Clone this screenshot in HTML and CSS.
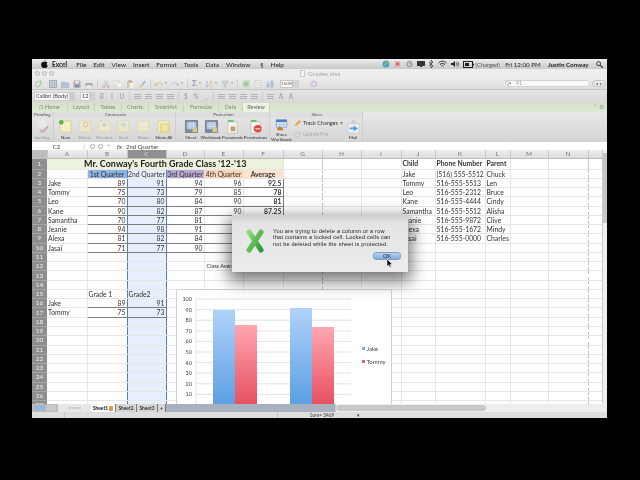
FILE: index.html
```html
<!DOCTYPE html>
<html lang="en">
<head>
  <meta charset="UTF-8">
  <title>Grades.xlsx</title>
  <link rel="stylesheet" href="styles.css">
</head>
<body>
  <svg class="defs" width="0" height="0">
    <defs>
      <linearGradient id="gradBlue" x1="0" y1="0" x2="0" y2="1"><stop offset="0" stop-color="#b0d2fa"/><stop offset="1" stop-color="#5a9ee2"/></linearGradient>
      <linearGradient id="gradRed" x1="0" y1="0" x2="0" y2="1"><stop offset="0" stop-color="#fea6b0"/><stop offset="1" stop-color="#e74e5e"/></linearGradient>
      <linearGradient id="gradX" x1="0" y1="0" x2="1" y2="1"><stop offset="0" stop-color="#8ddc72"/><stop offset="1" stop-color="#2f9a3a"/></linearGradient>
      <symbol id="note" viewBox="0 0 16 16"><rect x="2" y="2" width="12" height="12" rx="1" fill="#f4efc0" stroke="#d8d29a"/></symbol>
      <symbol id="sheet" viewBox="0 0 16 16"><rect x="1" y="1" width="14" height="14" rx="1" fill="#7d8794"/><path d="M3 3h10v8H3z" fill="#a9c0e2"/><path d="M3 5.500h10M3 8h10M6.500 3v8M10 3v8" stroke="#e8eef8" stroke-width=".6"/><rect x="9" y="9" width="5" height="5" fill="#d8c98c"/></symbol>
      <symbol id="page" viewBox="0 0 16 16"><path d="M3 3h10v12H3z" fill="#f6f6f2" stroke="#b5b5b0" stroke-width=".7"/><path d="M3 1h6v2H3z" fill="#58c860"/><rect x="6" y="8" width="5" height="5" fill="#b2a36e"/></symbol>
      <symbol id="tbNew" viewBox="0 0 8 8"><path d="M1 6c0-3 2-5 6-5 0 4-2 6-5 6" fill="none" stroke="#a5cc9c" stroke-width="1.200"/></symbol>
      <symbol id="tbGrid" viewBox="0 0 8 8"><rect x=".5" y=".5" width="7" height="7" fill="#d4d9de" stroke="#9aa3ac" stroke-width=".8"/><path d="M.5 3h7M.5 5.500h7M3 .5v7M5.500 .5v7" stroke="#9aa3ac" stroke-width=".5"/></symbol>
      <symbol id="tbOpen" viewBox="0 0 8 8"><path d="M.5 2h3l1 1h3v4.500h-7z" fill="#b4c4d8" stroke="#98a6b8" stroke-width=".5"/></symbol>
      <symbol id="tbSave" viewBox="0 0 8 8"><rect x=".5" y=".5" width="7" height="7" rx=".6" fill="#a6acb2"/><rect x="2" y="1" width="4" height="2.500" fill="#e4e6e8"/><rect x="2" y="5" width="4" height="2.500" fill="#888f96"/></symbol>
      <symbol id="tbPrint" viewBox="0 0 8 8"><rect x="2" y=".5" width="4" height="2.500" fill="#e6e6e6"/><rect x=".5" y="3" width="7" height="3" rx=".5" fill="#a4a9ae"/><rect x="2" y="5" width="4" height="2.500" fill="#ececec"/></symbol>
      <symbol id="tbCut" viewBox="0 0 8 8"><path d="M2 .5l3.500 5M6 .5L2.500 5.500" stroke="#b5b5b5" stroke-width=".7" fill="none"/><circle cx="2" cy="6.300" r="1.200" fill="none" stroke="#d69a92" stroke-width=".7"/><circle cx="6" cy="6.300" r="1.200" fill="none" stroke="#d69a92" stroke-width=".7"/></symbol>
      <symbol id="tbCopy" viewBox="0 0 8 8"><rect x=".5" y=".5" width="4.500" height="5.500" fill="#efefe6" stroke="#cfcfc2" stroke-width=".5"/><rect x="3" y="2.500" width="4.500" height="5" fill="#f5f5ee" stroke="#cfcfc2" stroke-width=".5"/></symbol>
      <symbol id="tbPaste" viewBox="0 0 8 8"><rect x="1" y="1" width="6" height="7" rx=".5" fill="#d8c79c"/><rect x="2.500" y=".2" width="3" height="1.600" fill="#aaa"/><rect x="3.500" y="3" width="4" height="5" fill="#f2f2ea"/></symbol>
      <symbol id="tbBrush" viewBox="0 0 8 8"><path d="M1 7l2-3 2 1.500L3 8z" fill="#e0c98b"/><path d="M4 4l3-3.500.8.8L5 5z" fill="#8fa8c8"/></symbol>
      <symbol id="tbUndo" viewBox="0 0 8 8"><path d="M2 4.500C3 2 6 2 7.500 5" stroke="#e1cd8e" stroke-width="1.300" fill="none"/><path d="M0 2.500l3.500 3H0z" fill="#d6c27f"/></symbol>
      <symbol id="tbRedo" viewBox="0 0 8 8"><path d="M6 4.500C5 2 2 2 .5 5" stroke="#c9d2de" stroke-width="1.300" fill="none"/><path d="M8 2.500l-3.500 3H8z" fill="#bcc7d6"/></symbol>
      <symbol id="tbSort" viewBox="0 0 8 8"><path d="M2 1v6M.5 5.500L2 7l1.500-1.500" stroke="#9ab8d8" stroke-width=".8" fill="none"/><path d="M4.500 1.500h3M4.500 4h2.500M4.500 6.500h2" stroke="#d9b88a" stroke-width=".9"/></symbol>
      <symbol id="tbFilter" viewBox="0 0 8 8"><path d="M.5 1h7L5 4.500V7.500L3 6.500v-2z" fill="#cfd3d6" stroke="#aeb4b9" stroke-width=".5"/></symbol>
      <symbol id="tbWidget" viewBox="0 0 8 8"><rect x=".5" y=".5" width="7" height="7" rx="1" fill="#c2d8bc"/><path d="M4 1.500v5M1.500 4h5" stroke="#8fbb86"/></symbol>
      <symbol id="tbPane" viewBox="0 0 8 8"><rect x="1" y=".5" width="6" height="7" fill="#f0f0ea" stroke="#cacac0" stroke-width=".6"/><path d="M2.500 2.500h3M2.500 4h3M2.500 5.500h3" stroke="#d4d4c8" stroke-width=".6"/></symbol>
      <symbol id="tbToolbox" viewBox="0 0 8 8"><path d="M.5 3h3v4.500h-3zM4.500 .5h3v7h-3z" fill="#aebfd6"/><path d="M.5 1h3v1.300h-3z" fill="#c9d5e4"/></symbol>
      <symbol id="tbHelp" viewBox="0 0 8 8"><circle cx="4" cy="4" r="3.500" fill="#d5c3df"/><circle cx="4" cy="4" r="1.300" fill="#f1ecf4"/></symbol>
    </defs>
  </svg>

  <div class="screen">
    <div class="menubar">
      <svg class="apple" viewBox="0 0 10 12" width="7" height="8"><path d="M7 0c0 1.300-1 2.400-2.200 2.400C4.800 1.100 5.800.1 7 0zM5 3c.8 0 1.300-.5 2.300-.5.900 0 1.700.5 2.200 1.200-1.900 1.200-1.600 3.700.4 4.500C9.400 9.900 8.300 12 7.200 12c-.8 0-1.100-.5-2-.5s-1.300.5-2 .5C1.800 12 0 9.400 0 7c0-2.700 1.700-4.400 3.300-4.400.7 0 1.200.4 1.700.4z" fill="#111"/></svg>
      <b class="menu-app">Excel</b>
      <span>File</span><span>Edit</span><span>View</span><span>Insert</span><span>Format</span><span>Tools</span><span>Data</span><span>Window</span>
      <span class="menu-script">&#167;</span><span>Help</span>
      <div class="status">
        <svg width="8" height="8" viewBox="0 0 8 8"><circle cx="4" cy="4" r="3.500" fill="#4d9ed8"/><path d="M2 5l4-3" stroke="#7fc04f" stroke-width="2"/></svg>
        <svg width="7" height="8" viewBox="0 0 8 8"><path d="M1 1h6v6H1z" fill="#e3a0a0"/><path d="M3 3h2v2H3z" fill="#c33"/></svg>
        <svg width="7" height="8" viewBox="0 0 8 8"><circle cx="4" cy="4" r="3" fill="none" stroke="#666" stroke-width=".8"/><path d="M4 2v2h2" stroke="#666" stroke-width=".7" fill="none"/></svg>
        <svg width="8" height="8" viewBox="0 0 8 8"><path d="M0 1h8v5H0zM3 6h2v1H3z" fill="#333"/></svg>
        <svg width="4" height="8" viewBox="0 0 4 8"><path d="M0 2l4 4-2 2V0l2 2-4 4" stroke="#333" stroke-width=".7" fill="none"/></svg>
        <svg width="9" height="8" viewBox="0 0 9 8"><path d="M.5 3c2.400-2.400 5.600-2.400 8 0M2 4.500c1.500-1.400 3.500-1.400 5 0M3.500 6c.6-.6 1.400-.6 2 0" stroke="#222" fill="none"/></svg>
        <svg width="8" height="8" viewBox="0 0 8 8"><path d="M0 3h2l2-2v6L2 5H0z" fill="#222"/><path d="M5 2.500c1 1 1 2 0 3M6.300 1.500c1.500 1.500 1.500 3.500 0 5" stroke="#222" stroke-width=".7" fill="none"/></svg>
        <svg width="11" height="7" viewBox="0 0 11 7"><rect x=".5" y=".5" width="9" height="6" fill="none" stroke="#222"/><rect x="2" y="2" width="4" height="3" fill="#222"/><path d="M10 2.500h1v2h-1z" fill="#222"/></svg>
        <span class="charged">(Charged)</span>
        <span class="clock">Fri 12:00 PM</span>
        <span class="user">Justin Conway</span>
        <svg width="7" height="7" viewBox="0 0 8 8"><circle cx="3" cy="3" r="2.300" fill="none" stroke="#222"/><path d="M5 5l3 3" stroke="#222" stroke-width="1.200"/></svg>
      </div>
    </div>

    <div class="window">
      <div class="titlebar">
        <div class="lights"><i></i><i></i><i></i></div>
        <div class="doc-title"><i></i>Grades.xlsx</div>
      </div>

      <div class="toolbar">
        <svg class="tb tb-first"><use href="#tbNew"/></svg>
        <svg class="tb"><use href="#tbGrid"/></svg><svg class="tb"><use href="#tbOpen"/></svg><svg class="tb"><use href="#tbSave"/></svg><svg class="tb"><use href="#tbPrint"/></svg>
        <i class="tb-sep"></i>
        <svg class="tb"><use href="#tbCut"/></svg><svg class="tb"><use href="#tbCopy"/></svg><svg class="tb"><use href="#tbPaste"/></svg><svg class="tb"><use href="#tbBrush"/></svg>
        <i class="tb-sep"></i>
        <svg class="tb"><use href="#tbUndo"/></svg><i class="tb-drop"></i><svg class="tb"><use href="#tbRedo"/></svg><i class="tb-drop"></i>
        <i class="tb-sep"></i>
        <b class="sigma">&Sigma;</b><i class="tb-drop"></i><svg class="tb"><use href="#tbSort"/></svg><i class="tb-drop"></i><svg class="tb"><use href="#tbFilter"/></svg><i class="tb-drop"></i>
        <i class="tb-sep"></i>
        <svg class="tb"><use href="#tbWidget"/></svg><svg class="tb"><use href="#tbPane"/></svg><svg class="tb"><use href="#tbToolbox"/></svg>
        <span class="zoom-box">150%</span><i class="zoom-step"></i>
        <svg class="tb tb-help"><use href="#tbHelp"/></svg>
        <div class="search">
          <span class="search-field"><span class="lens">Q&#9662;</span>91</span>
          <span class="search-nav">&#9666; &#9656;</span>
        </div>
      </div>

      <div class="formatbar">
        <span class="font-name">Calibri (Body)</span><i class="fb-stepper"></i>
        <span class="font-size">12</span><i class="fb-stepper"></i>
        <span class="fb-letter">B</span><span class="fb-letter">I</span><span class="fb-letter">U</span>
        <i class="fb-sep"></i>
        <i class="fb-lines"></i><i class="fb-lines"></i><i class="fb-lines"></i><i class="fb-lines"></i>
        <i class="fb-sep"></i>
        <span class="fb-letter">$</span><span class="fb-letter">%</span><span class="fb-letter">,</span>
        <i class="fb-sep"></i>
        <i class="fb-lines"></i><i class="fb-lines"></i><i class="fb-lines"></i><i class="fb-lines"></i>
        <i class="fb-sep"></i>
        <i class="fb-lines"></i><span class="fb-letter">A</span><span class="fb-letter">A</span>
      </div>

      <div class="ribbon-tabs">
        <span class="tab tab-home">&#8962; Home</span>
        <span class="tab tab-m">Layout</span>
        <span class="tab tab-m">Tables</span>
        <span class="tab tab-m">Charts</span>
        <span class="tab tab-l">SmartArt</span>
        <span class="tab tab-l">Formulas</span>
        <span class="tab tab-s">Data</span>
        <span class="tab tab-m tab-on">Review</span>
        <span class="tab-tools">&#8963; &#9881;</span>
      </div>

      <div class="ribbon">
        <div class="group group-proof">
          <div class="group-label">Proofing</div>
          <div class="tools">
            <div class="tool off"><svg width="15" height="15" viewBox="0 0 16 16"><rect x="3" y="1" width="9" height="8" fill="#eee"/><path d="M5 12l3 2 6-6" stroke="#b98a8a" stroke-width="2" fill="none"/></svg><span>Spelling</span></div>
          </div>
        </div>
        <div class="group group-comments">
          <div class="group-label">Comments</div>
          <div class="tools">
            <div class="tool tool-new"><svg width="15" height="15" viewBox="0 0 16 16"><use href="#note"/><circle cx="3.500" cy="3.500" r="2.500" fill="#58b64a"/></svg><span>New</span></div>
            <div class="tool off"><svg width="15" height="15" viewBox="0 0 16 16"><use href="#note"/><circle cx="8" cy="6" r="2.500" fill="none" stroke="#d98" /></svg><span>Delete</span></div>
            <div class="tool off"><svg width="15" height="15" viewBox="0 0 16 16"><use href="#note"/><path d="M5 6l3-3v2h3v2H8v2z" fill="#a9c6e8"/></svg><span>Previous</span></div>
            <div class="tool off"><svg width="15" height="15" viewBox="0 0 16 16"><use href="#note"/><path d="M11 6L8 3v2H5v2h3v2z" fill="#a9c6e8"/></svg><span>Next</span></div>
            <div class="tool off"><svg width="15" height="15" viewBox="0 0 16 16"><use href="#note"/></svg><span>Show</span></div>
            <div class="tool tool-wide"><svg width="15" height="15" viewBox="0 0 16 16"><use href="#note"/><rect x="5" y="5" width="9" height="9" rx="1" fill="#eee39c" stroke="#c9bd6a" stroke-width=".6"/></svg><span>Show All</span></div>
          </div>
        </div>
        <div class="group group-protect">
          <div class="group-label">Protection</div>
          <div class="tools">
            <div class="tool"><svg width="17" height="15" viewBox="0 0 16 16"><use href="#sheet"/></svg><span>Sheet</span></div>
            <div class="tool"><svg width="17" height="15" viewBox="0 0 16 16"><use href="#sheet"/></svg><span>Workbook</span></div>
            <div class="tool tool-wide"><svg width="15" height="15" viewBox="0 0 16 16"><use href="#page"/></svg><span>Passwords</span></div>
            <div class="tool tool-wide"><svg width="15" height="15" viewBox="0 0 16 16"><use href="#page"/><circle cx="10.500" cy="10.500" r="4" fill="#e04a3f"/><path d="M8 10.500h5" stroke="#fff"/></svg><span>Permissions</span></div>
          </div>
        </div>
        <div class="group group-share">
          <div class="group-label">Share</div>
          <div class="tools">
            <div class="tool tool-share"><svg width="15" height="12" viewBox="0 0 16 16"><path d="M1 1h14v10H1z" fill="#dbe5f5" stroke="#3f66a8" stroke-width=".6"/><path d="M1 1h14v3H1z" fill="#4a76bd"/><path d="M1 7h14M6 1v10M11 1v10" stroke="#7d9ccb" stroke-width=".5"/><path d="M2 13l3-3 4 2 2 3H3z" fill="#c77d2e"/></svg><span>Share<br>Workbook</span></div>
            <div class="share-list">
              <span class="share-row"><svg width="7" height="7" viewBox="0 0 8 8"><path d="M1 7l1-3 4-4 2 2-4 4z" fill="#e3a55a"/></svg>Track Changes <em>&#9662;</em></span>
              <span class="share-row share-off"><svg width="7" height="7" viewBox="0 0 8 8"><path d="M1 1h6v6H1z" fill="#d8d8d8" stroke="#bbb" stroke-width=".6"/></svg>Update File</span>
            </div>
            <div class="tool tool-mail"><svg width="15" height="15" viewBox="0 0 16 16"><path d="M2 5h12v10H2z" fill="#eef0f3" stroke="#b5bac2" stroke-width=".6"/><path d="M6 1h4v4H6z" fill="#ccd"/><path d="M4 9h4V7l5 3-5 3v-2H4z" fill="#4c9fdc"/></svg><span>Mail</span></div>
          </div>
        </div>
      </div>

      <div class="formulabar">
        <span class="name-box">C2</span>
        <span class="fx-tools">&#8942;<i></i><i></i><em>&#8963;</em></span>
        <span class="fx">fx</span>
        <span class="fx-value">2nd Quarter</span>
      </div>

      <div class="workarea">
        <div class="sheet">
          <table class="grid">
            <colgroup>
              <col class="c-row"><col class="c-a"><col class="c-b"><col class="c-c"><col class="c-d"><col class="c-e"><col class="c-f"><col class="c-g"><col class="c-h"><col class="c-i"><col class="c-j"><col class="c-k"><col class="c-l"><col class="c-m"><col class="c-n"><col class="c-o">
            </colgroup>
            <thead>
              <tr><th class="corner"></th><th>A</th><th>B</th><th class="col-on">C</th><th>D</th><th>E</th><th>F</th><th>G</th><th>H</th><th>I</th><th>J</th><th>K</th><th>L</th><th>M</th><th>N</th><th></th></tr>
            </thead>
            <tbody>
              <tr class="title"><th>1</th><td colspan="6" class="sheet-title">Mr. Conway's Fourth Grade Class '12-'13</td><td class="brk"></td><td></td><td></td><td class="hd">Child</td><td class="hd">Phone Number</td><td class="hd">Parent</td><td></td><td class="brk"></td><td></td></tr>
              <tr><th>2</th><td></td><td class="q q1">1st Quarter</td><td class="q q2">2nd Quarter</td><td class="q q3">3rd Quarter</td><td class="q q4">4th Quarter</td><td class="q q5">Average</td><td></td><td></td><td></td><td>Jake</td><td>(516) 555-5512</td><td>Chuck</td><td></td><td></td><td></td></tr>
              <tr><th>3</th><td>Jake</td><td class="n">89</td><td class="n">91</td><td class="n">94</td><td class="n">96</td><td class="n avg">92.5</td><td></td><td></td><td></td><td>Tommy</td><td>516-555-5513</td><td>Len</td><td></td><td></td><td></td></tr>
              <tr><th>4</th><td>Tommy</td><td class="n">75</td><td class="n">73</td><td class="n">79</td><td class="n">85</td><td class="n avg">78</td><td></td><td></td><td></td><td>Leo</td><td>516-555-2312</td><td>Bruce</td><td></td><td></td><td></td></tr>
              <tr><th>5</th><td>Leo</td><td class="n">70</td><td class="n">80</td><td class="n">84</td><td class="n">90</td><td class="n avg">81</td><td></td><td></td><td></td><td>Kane</td><td>516-555-4444</td><td>Cindy</td><td></td><td></td><td></td></tr>
              <tr><th>6</th><td>Kane</td><td class="n">90</td><td class="n">82</td><td class="n">87</td><td class="n">90</td><td class="n avg">87.25</td><td></td><td></td><td></td><td>Samantha</td><td>516-555-5512</td><td>Alisha</td><td></td><td></td><td></td></tr>
              <tr><th>7</th><td>Samantha</td><td class="n">70</td><td class="n">77</td><td class="n">81</td><td class="n"></td><td class="n"></td><td></td><td></td><td></td><td>Jeanie</td><td>516-555-9872</td><td>Clive</td><td></td><td></td><td></td></tr>
              <tr><th>8</th><td>Jeanie</td><td class="n">94</td><td class="n">98</td><td class="n">91</td><td class="n"></td><td class="n"></td><td></td><td></td><td></td><td>Alexa</td><td>516-555-1672</td><td>Mindy</td><td></td><td></td><td></td></tr>
              <tr><th>9</th><td>Alexa</td><td class="n">81</td><td class="n">82</td><td class="n">84</td><td class="n"></td><td class="n"></td><td></td><td></td><td></td><td>Jasai</td><td>516-555-0000</td><td>Charles</td><td></td><td></td><td></td></tr>
              <tr><th>10</th><td>Jasai</td><td class="n">71</td><td class="n">77</td><td class="n">90</td><td class="n"></td><td class="n"></td><td></td><td></td><td></td><td></td><td></td><td></td><td></td><td></td><td></td></tr>
              <tr><th>11</th><td></td><td></td><td></td><td></td><td></td><td></td><td></td><td></td><td></td><td></td><td></td><td></td><td></td><td></td><td></td></tr>
              <tr><th>12</th><td></td><td></td><td></td><td></td><td class="small">Class Average</td><td></td><td></td><td></td><td></td><td></td><td></td><td></td><td></td><td></td><td></td></tr>
              <tr><th>13</th><td></td><td></td><td></td><td></td><td></td><td></td><td></td><td></td><td></td><td></td><td></td><td></td><td></td><td></td><td></td></tr>
              <tr><th>14</th><td></td><td></td><td></td><td></td><td></td><td></td><td></td><td></td><td></td><td></td><td></td><td></td><td></td><td></td><td></td></tr>
              <tr><th>15</th><td></td><td>Grade 1</td><td>Grade2</td><td></td><td></td><td></td><td></td><td></td><td></td><td></td><td></td><td></td><td></td><td></td><td></td></tr>
              <tr><th>16</th><td>Jake</td><td class="n">89</td><td class="n">91</td><td></td><td></td><td></td><td></td><td></td><td></td><td></td><td></td><td></td><td></td><td></td><td></td></tr>
              <tr><th>17</th><td>Tommy</td><td class="n">75</td><td class="n">73</td><td></td><td></td><td></td><td></td><td></td><td></td><td></td><td></td><td></td><td></td><td></td><td></td></tr>
              <tr><th>18</th><td></td><td></td><td></td><td></td><td></td><td></td><td></td><td></td><td></td><td></td><td></td><td></td><td></td><td></td><td></td></tr>
              <tr><th>19</th><td></td><td></td><td></td><td></td><td></td><td></td><td></td><td></td><td></td><td></td><td></td><td></td><td></td><td></td><td></td></tr>
              <tr><th>20</th><td></td><td></td><td></td><td></td><td></td><td></td><td></td><td></td><td></td><td></td><td></td><td></td><td></td><td></td><td></td></tr>
              <tr><th>21</th><td></td><td></td><td></td><td></td><td></td><td></td><td></td><td></td><td></td><td></td><td></td><td></td><td></td><td></td><td></td></tr>
              <tr><th>22</th><td></td><td></td><td></td><td></td><td></td><td></td><td></td><td></td><td></td><td></td><td></td><td></td><td></td><td></td><td></td></tr>
              <tr><th>23</th><td></td><td></td><td></td><td></td><td></td><td></td><td></td><td></td><td></td><td></td><td></td><td></td><td></td><td></td><td></td></tr>
              <tr><th>24</th><td></td><td></td><td></td><td></td><td></td><td></td><td></td><td></td><td></td><td></td><td></td><td></td><td></td><td></td><td></td></tr>
              <tr><th>25</th><td></td><td></td><td></td><td></td><td></td><td></td><td></td><td></td><td></td><td></td><td></td><td></td><td></td><td></td><td></td></tr>
              <tr><th>26</th><td></td><td></td><td></td><td></td><td></td><td></td><td></td><td></td><td></td><td></td><td></td><td></td><td></td><td></td><td></td></tr>
              <tr><th>27</th><td></td><td></td><td></td><td></td><td></td><td></td><td></td><td></td><td></td><td></td><td></td><td></td><td></td><td></td><td></td></tr>
            </tbody>
          </table>

          <div class="chart">
            <svg width="216" height="116" viewBox="0 0 216 116">
              <g class="chart-grid">
                <path d="M19 9h155M19 19.600h155M19 30.200h155M19 40.800h155M19 51.400h155M19 62h155M19 72.600h155M19 83.200h155M19 93.800h155M19 104.400h155M19 9v106"/>
              </g>
              <g class="chart-axis">
                <text x="15" y="11">100</text><text x="15" y="21.600">90</text><text x="15" y="32.200">80</text><text x="15" y="42.800">70</text><text x="15" y="53.400">60</text><text x="15" y="64">50</text><text x="15" y="74.600">40</text><text x="15" y="85.200">30</text><text x="15" y="95.800">20</text><text x="15" y="106.400">10</text>
              </g>
              <rect x="36" y="20" width="22" height="96" fill="url(#gradBlue)"/>
              <rect x="58" y="35" width="22" height="81" fill="url(#gradRed)"/>
              <rect x="113" y="18" width="22" height="98" fill="url(#gradBlue)"/>
              <rect x="135" y="37" width="22" height="79" fill="url(#gradRed)"/>
              <rect x="185" y="57" width="3" height="3" fill="#7fb0e6"/>
              <rect x="185" y="70" width="3" height="3" fill="#e8606e"/>
              <text class="chart-legend" x="189.500" y="61">Jake</text>
              <text class="chart-legend" x="189.500" y="74">Tommy</text>
            </svg>
          </div>

          <div class="dialog">
            <svg class="dialog-icon" width="20" height="24" viewBox="0 0 20 24">
              <path d="M4 3l12 18M16 3L4 21" stroke="url(#gradX)" stroke-width="5" stroke-linecap="round" fill="none"/>
            </svg>
            <div class="dialog-body">
              <p>You are trying to delete a column or a row<br>that contains a locked cell. Locked cells can<br>not be deleted while the sheet is protected.</p>
              <div class="dialog-actions"><button class="ok">OK</button></div>
            </div>
            <svg class="pointer" width="6" height="9" viewBox="0 0 6 9"><path d="M0 0v7.500l1.800-1.600L3 8.500l1.200-.5L3 5.500h2.500z" fill="#111" stroke="#fff" stroke-width=".5"/></svg>
          </div>
        </div>
        <div class="vscroll"><i></i></div>
      </div>

      <div class="tabbar">
        <div class="views"><i class="view-on"></i><i></i></div>
        <span class="tab-nav">|&#9666; &#9666; &#9656; &#9656;|</span>
        <span class="sheet-tab sheet-tab-on">Sheet1 <i class="lock"></i></span>
        <span class="sheet-tab">Sheet2</span>
        <span class="sheet-tab">Sheet3</span>
        <span class="sheet-tab sheet-add">+</span>
        <div class="hscroll"><i></i></div>
      </div>
      <div class="statusbar">
        <span class="st-a"></span>
        <span class="st-b"></span>
        <span class="st-sum">Sum= 3469</span>
        <span class="st-drop">&#9662;</span>
      </div>
    </div>
  </div>
</body>
</html>
```

FILE: styles.css
```css
* {
  box-sizing: border-box;
}

html, body {
  margin: 0;
  height: 480px;
  overflow: hidden;
  background: #000;
}

body {
  font-family: Lato, "Liberation Sans", sans-serif;
  color: #333;
}

.defs {
  position: absolute;
}

.screen {
  margin: 59px 0 0 32px;
  width: 575px;
  height: 359px;
  display: flex;
  flex-direction: column;
  filter: blur(0.35px);
}

/* mac menu bar */
.menubar {
  height: 10px;
  display: flex;
  align-items: center;
  padding-left: 9px;
  background: linear-gradient(#ececec, #c8c8c8);
  font-size: 6.5px;
  color: #222;
  white-space: nowrap;
}

.menubar > span {
  margin-right: 7px;
}

.menu-app {
  margin: 0 9px 0 4px;
  font-weight: 700;
}

.menu-script {
  margin-left: 3px;
}

.status {
  margin-left: auto;
  padding-right: 4px;
  display: flex;
  align-items: center;
  gap: 4.300px;
}

.charged {
  margin-left: -3px;
  color: #555;
  font-size: 5.800px;
}

.clock {
  margin-left: 1px;
  font-size: 6.200px;
}

.user {
  margin: 0 3px;
  font-weight: 700;
  font-size: 6.300px;
}

/* excel window */
.window {
  flex: 1;
  display: flex;
  flex-direction: column;
  min-height: 0;
  background: #e2e2e2;
}

.titlebar {
  height: 9px;
  position: relative;
  background: #ededed;
  display: flex;
  align-items: center;
  padding-left: 3px;
}

.lights {
  display: flex;
  gap: 2px;
}

.lights i {
  width: 5px;
  height: 5px;
  border-radius: 50%;
  border: 1px solid #bbb;
  background: #e4e4e4;
}

.doc-title {
  margin-left: 246px;
  display: flex;
  align-items: center;
  gap: 3px;
  font-size: 6.5px;
  color: #aaa;
}

.doc-title i {
  width: 5px;
  height: 7px;
  background: #f4f4f0;
  border: 1px solid #ccc;
}

.toolbar {
  height: 12px;
  display: flex;
  align-items: center;
  gap: 4px;
  padding-left: 2px;
  background: linear-gradient(#ececec, #dedede);
  border-bottom: 1px solid #c4c4c4;
}

.tb {
  width: 8px;
  height: 8px;
  flex: none;
}

.tb-first { margin-right: 3px; }
.tb-help { margin-left: 7px; }

.tb-sep {
  width: 1px;
  height: 9px;
  background: #cfcfcf;
}

.tb-drop {
  width: 0;
  height: 0;
  margin-left: -2px;
  border: 1.500px solid transparent;
  border-top: 2px solid #999;
}

.sigma {
  font-size: 8px;
  line-height: 9px;
  color: #8d9db3;
}

.zoom-box {
  width: 13px;
  height: 8px;
  margin-left: 2px;
  background: #fafafa;
  border: 1px solid #c4c4c4;
  font-size: 4.500px;
  line-height: 6px;
  text-align: center;
  color: #666;
}

.zoom-step {
  width: 6px;
  height: 8px;
  margin-left: -4px;
  background: #d4d4d4;
}

.search {
  margin-left: auto;
  display: flex;
  align-items: center;
  gap: 2px;
  padding-right: 1px;
}

.search-field {
  width: 88px;
  height: 7px;
  border: 1px solid #d4d4d4;
  border-radius: 4px;
  background: #f8f8f8;
  font-size: 5px;
  line-height: 5px;
  color: #999;
}

.lens {
  margin: 0 4px 0 2px;
}

.search-nav {
  width: 14px;
  height: 7px;
  border: 1px solid #c4c4c4;
  border-radius: 4px;
  font-size: 4px;
  line-height: 5px;
  text-align: center;
  color: #666;
}

.formatbar {
  height: 13px;
  display: flex;
  align-items: center;
  padding-left: 2px;
  gap: 4px;
  background: linear-gradient(#e4e4e4, #d8d8d8);
  color: #aaa;
  font-size: 6.500px;
}

.font-name, .font-size {
  height: 9px;
  background: #f8f8f8;
  border: 1px solid #cdcdcd;
  color: #444;
  font-size: 5.500px;
  line-height: 7px;
  padding-left: 1px;
}

.font-name { width: 36px; }
.font-size { width: 10px; margin-left: 1px; }

.fb-stepper {
  width: 5px;
  height: 9px;
  margin-left: -4px;
  background: #cfcfcf;
}

.fb-letter {
  width: 6px;
  text-align: center;
  font-weight: 700;
}

.fb-sep {
  width: 1px;
  height: 9px;
  background: #cbcbcb;
}

.fb-lines {
  width: 7px;
  height: 5px;
  background: repeating-linear-gradient(#b3b3b3 0, #b3b3b3 1px, transparent 1px, transparent 2px);
}

.ribbon-tabs {
  height: 9px;
  display: flex;
  background: linear-gradient(#d2e3c8, #dde9d3);
  font-size: 5.500px;
  line-height: 9px;
  color: #7c8a76;
}

.tab {
  text-align: center;
  border-right: 1px solid #c6d5bb;
}

.tab-home { width: 36px; }
.tab-m { width: 27px; }
.tab-l { width: 35px; }
.tab-s { width: 24px; }

.tab-on {
  background: #ebf3e4;
  color: #666;
}

.tab-tools {
  margin-left: auto;
  padding-right: 3px;
  color: #999;
}

.ribbon {
  height: 30px;
  display: flex;
  background: linear-gradient(#e8e8e8, #d6d6d6);
  border-bottom: 1px solid #cfcfcf;
}

.group {
  border-right: 1px solid #cecece;
}

.group-label {
  height: 6px;
  padding-left: 2px;
  background: #dfdfdf;
  font-size: 4.500px;
  line-height: 6px;
  text-align: center;
  color: #555;
}

.group-proof { width: 22px; }
.group-proof .group-label { text-align: left; }
.group-comments { width: 122px; }
.group-protect { width: 94px; }
.group-share { width: 93px; }

.tools {
  display: flex;
  padding-top: 1px;
}

.tool {
  width: 20px;
  display: flex;
  flex-direction: column;
  align-items: center;
  font-size: 4.500px;
  line-height: 5px;
  white-space: nowrap;
  text-align: center;
  color: #333;
}

.tool svg {
  margin-bottom: 1px;
}

.tool.off {
  color: #999;
}

.tool.off svg {
  opacity: 0.6;
}

.tool-wide {
  width: 23px;
}

.tool-share {
  width: 23px;
}

.tool-mail {
  width: 18px;
  margin-left: auto;
}

.group-protect .tools {
  padding-left: 5px;
}

.group-comments .tools {
  padding-left: 2px;
}

.share-list {
  display: flex;
  flex-direction: column;
  gap: 4px;
  padding-top: 1px;
  font-size: 5.500px;
  line-height: 7px;
  margin-left: 1px;
}

.share-row {
  display: flex;
  align-items: center;
  gap: 2px;
  white-space: nowrap;
}

.share-row em {
  font-style: normal;
  color: #888;
}

.share-off {
  color: #aaa;
  font-size: 5px;
}

.formulabar {
  height: 8px;
  display: flex;
  align-items: center;
  background: #fff;
  font-size: 6px;
  color: #444;
}

.name-box {
  width: 49px;
  text-align: center;
}

.fx-tools {
  width: 36px;
  display: flex;
  align-items: center;
  gap: 3px;
  color: #888;
}

.fx-tools i {
  width: 5px;
  height: 5px;
  border-radius: 50%;
  border: 1px solid #aaa;
}

.fx-tools em {
  font-style: normal;
}

.fx {
  width: 9px;
  font-style: italic;
  font-weight: 700;
  color: #666;
}

/* sheet */
.workarea {
  height: 254px;
  display: flex;
}

.sheet {
  flex: 1;
  position: relative;
  overflow: hidden;
  background: #fff;
}

.grid {
  width: 570px;
  table-layout: fixed;
  border-collapse: collapse;
  font-size: 6.800px;
  line-height: 8px;
  color: #333;
}

.c-row { width: 15px; }
.c-a { width: 40px; }
.c-b { width: 40px; }
.c-c { width: 39px; }
.c-d { width: 38px; }
.c-e { width: 39px; }
.c-f { width: 40px; }
.c-g { width: 39px; }
.c-h { width: 39px; }
.c-i { width: 40px; }
.c-j { width: 34px; }
.c-k { width: 50px; }
.c-l { width: 25px; }
.c-m { width: 38px; }
.c-n { width: 40px; }
.c-o { width: 14px; }

.grid thead th {
  height: 8px;
  padding: 0;
  background: linear-gradient(#eee, #dcdcdc);
  border-right: 1px solid #c8c8c8;
  border-bottom: 1px solid #bdbdbd;
  font-weight: 400;
  font-size: 6.500px;
  line-height: 7px;
  color: #777;
}

.grid thead th.corner {
  background: #bdbdbd;
}

.grid thead th.col-on {
  background: #909090;
  color: #ddd;
}

.grid tbody tr {
  height: 9.270px;
}

.grid tbody tr.title {
  height: 11px;
}

.grid tbody th {
  padding: 0;
  background: #8e8e8e;
  border-bottom: 1px solid #a4a4a4;
  font-weight: 400;
  font-size: 6.500px;
  color: #eee;
}

.grid td {
  padding: 0 0 0 1px;
  border-right: 1px solid #e6e6e6;
  border-bottom: 1px solid #e6e6e6;
  white-space: nowrap;
  vertical-align: top;
}

.grid tr:not(.title) td:nth-child(3) {
  border-right: 1px solid #4f7fca;
}

.grid tr:not(.title) td:nth-child(4) {
  background: #e7effc;
  border-right: 1px solid #4f7fca;
}

.grid tr:not(.title) td:nth-child(8),
.grid tr:not(.title) td:nth-child(15),
.grid td.brk {
  border-right: 1px dashed #b4c5da;
}

.grid td.sheet-title {
  background: #ebf3dc;
  text-align: center;
  font-weight: 700;
  font-size: 9px;
  line-height: 10px;
  color: #222;
}

.grid td.hd {
  font-weight: 700;
}

.grid td.q {
  padding: 0;
  text-align: center;
}

.grid td.q1 { background: #8db4e2; }
.grid td.q2 { background: #d8e4bc; }
.grid td.q3 { background: #b9a9d0; }
.grid td.q4 { background: #fcd5b4; }
.grid td.q5 { background: #fde4d0; font-weight: 700; }

.grid td.n {
  padding: 0 1px 0 0;
  text-align: right;
  border-top: 1px solid #7e7e7e;
  border-bottom: 1px solid #7e7e7e;
  border-left: 1px solid #7e7e7e;
}

.grid td.avg {
  font-weight: 700;
  border-right: 1px solid #7e7e7e;
}

.grid td.small {
  font-size: 5.500px;
  padding-left: 2px;
}

/* chart floats over the cells */
.chart {
  position: absolute;
  left: 144px;
  top: 139px;
  width: 216px;
  height: 130px;
  background: #fff;
  border: 1px solid #d0d0d0;
}

.chart svg {
  display: block;
}

.chart-grid path {
  fill: none;
  stroke: #dcdcdc;
  stroke-width: 0.8;
}

.chart-axis text {
  font-size: 5.500px;
  text-anchor: end;
  fill: #444;
}

.chart-legend {
  font-size: 6px;
  fill: #444;
}

/* locked cell alert */
.dialog {
  position: absolute;
  left: 200px;
  top: 65px;
  width: 176px;
  height: 57px;
  display: flex;
  background: linear-gradient(#cfcfcf 0, #e4e4e4 8px, #ececec 100%);
  box-shadow: 0 6px 16px 3px rgba(0, 0, 0, 0.55);
}

.dialog-icon {
  margin: 14px 0 0 13px;
}

.dialog-body {
  flex: 1;
  margin-left: 8px;
  padding: 13px 7px 0 0;
}

.dialog-body p {
  margin: 0;
  font-family: "Liberation Sans", sans-serif;
  font-size: 5.600px;
  line-height: 6.300px;
  letter-spacing: 0.2px;
  color: #222;
}

.dialog-actions {
  display: flex;
  justify-content: flex-end;
  margin-top: 5px;
}

.ok {
  width: 28px;
  height: 8px;
  padding: 0;
  border: 1px solid #7f9fc9;
  border-radius: 3px;
  background: linear-gradient(#bcd4f0, #7fabe0);
  font-family: "Liberation Sans", sans-serif;
  font-size: 5.500px;
  line-height: 6px;
  color: #222;
}

.pointer {
  position: absolute;
  left: 155px;
  top: 44px;
}

.vscroll {
  width: 5px;
  background: #f0f0f0;
  border-left: 1px solid #ccc;
  padding-top: 3px;
}

.vscroll i {
  display: block;
  height: 70px;
  background: #c6c6c6;
}

/* sheet tabs and status */
.tabbar {
  height: 8px;
  display: flex;
  align-items: center;
  background: #a8b2be;
  font-size: 4.800px;
  line-height: 8px;
  color: #333;
}

.views {
  width: 26px;
  height: 8px;
  display: flex;
  gap: 1px;
  padding: 1px 2px;
  background: #bbb;
}

.views i {
  flex: 1;
  background: #c9c9c9;
}

.views .view-on {
  background: #9db6d6;
}

.tab-nav {
  width: 33px;
  height: 8px;
  background: #e6e6e6;
  text-align: center;
  color: #aaa;
  font-size: 3.500px;
}

.sheet-tab {
  width: 21px;
  height: 8px;
  display: flex;
  align-items: center;
  justify-content: center;
  gap: 1px;
  background: #d6d6d6;
  border-right: 1px solid #777;
  font-weight: 700;
}

.sheet-tab-on {
  width: 25px;
  background: #fff;
  color: #111;
}

.sheet-add {
  width: 8px;
}

.lock {
  width: 4px;
  height: 5px;
  background: #dc9a4c;
  border-radius: 1px;
}

.hscroll {
  margin-left: auto;
  width: 272px;
  height: 8px;
  padding: 1px 5px 1px 0;
  background: #ededed;
  border-left: 1px solid #ccc;
}

.hscroll i {
  display: block;
  width: 150px;
  height: 6px;
  border-radius: 3px;
  background: #c8c8c8;
}

.statusbar {
  height: 6px;
  display: flex;
  align-items: center;
  background: #dedede;
  font-size: 4.800px;
  line-height: 6px;
  color: #444;
}

.st-a {
  width: 33px;
  height: 6px;
  border-right: 1px solid #c6c6c6;
}

.st-b {
  width: 213px;
  height: 6px;
  border-right: 1px solid #c6c6c6;
}

.st-sum {
  width: 81px;
  padding-left: 32px;
  white-space: nowrap;
}

.st-drop {
  font-size: 5px;
  margin-left: -2px;
}
```
